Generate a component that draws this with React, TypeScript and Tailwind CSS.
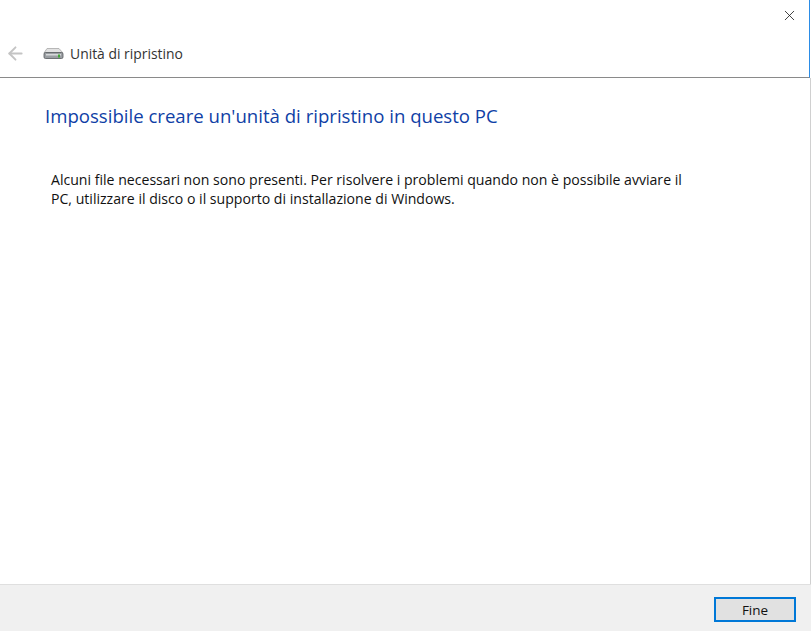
import { ArrowLeft, X } from "lucide-react";

const DriveIcon = () => (
  <svg width="22" height="14" viewBox="0 0 22 14" className="mt-[3px] mr-[5px] shrink-0">
    <path d="M4 2.5 L16 2.5 L20 7 L1 7 Z" fill="#e2e2e2" stroke="#a8a8a8" strokeWidth="0.8" />
    <rect x="1" y="6.5" width="19" height="6" rx="1.5" fill="#9a9ea2" stroke="#55595d" strokeWidth="0.8" />
    <rect x="3" y="8" width="15" height="1.5" fill="#d6d8da" />
    <rect x="15" y="8.5" width="2" height="3" fill="#3fa535" />
  </svg>
);

export default function App() {
  return (
    <div className="flex h-[631px] w-[811px] flex-col overflow-hidden bg-white font-['Open_Sans',sans-serif] text-[#1a1a1a]">
      <div className="flex h-[78px] w-[810px] shrink-0 flex-col border-r border-b border-r-[#2b8ce6] border-b-[#8a8a8a]">
        <div className="flex h-[40px] justify-end pr-[11px] pt-[7px]">
          <X size={17} strokeWidth={1.1} color="#111" />
        </div>
        <div className="flex items-start pl-[5px] pt-[3px]">
          <ArrowLeft size={21} strokeWidth={2.2} color="#c4c4c4" className="mr-[17px]" />
          <DriveIcon />
          <span className="mt-[1px] text-[13.9px] leading-[19px] text-[#333]">Unità di ripristino</span>
        </div>
      </div>
      <div className="flex-1 border-r border-[#d0d0d0] pl-[45px] pt-[25px]">
        <h1 className="text-[18.6px] leading-[25px] font-normal text-[#0f3fa6]">
          Impossibile creare un'unità di ripristino in questo PC
        </h1>
        <p className="mt-[42px] ml-[6px] w-[640px] text-[14.1px] leading-[19px] text-[#111]">
          Alcuni file necessari non sono presenti. Per risolvere i problemi quando non è possibile avviare il PC,
          utilizzare il disco o il supporto di installazione di Windows.
        </p>
      </div>
      <div className="flex h-[47px] shrink-0 items-start justify-end border-t border-[#dfdfdf] bg-[#f0f0f0] pr-[15px] pt-[12px]">
        <button className="h-[25px] w-[82px] border-2 border-[#0078d7] bg-[#e1e1e1] text-[13.5px] leading-[20px] text-[#111]">
          Fine
        </button>
      </div>
    </div>
  );
}
